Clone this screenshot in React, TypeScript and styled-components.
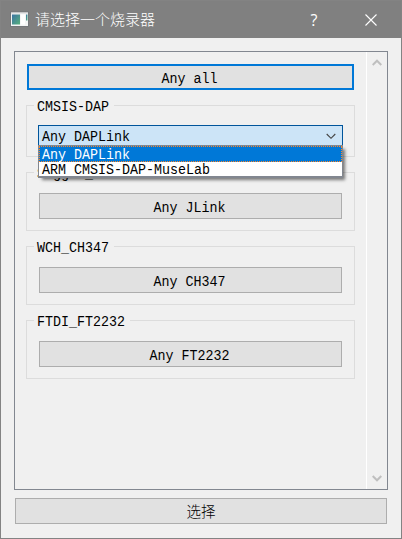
import React from "react";
import styled, { createGlobalStyle } from "styled-components";

const GlobalStyle = createGlobalStyle`
  * { box-sizing: border-box; }
  body { margin: 0; background: #f0f0f0; }
`;

const Dialog = styled.div`
  width: 402px;
  height: 539px;
  display: flex;
  flex-direction: column;
  border: 1px solid #838383;
  background: #f0f0f0;
  color: #000;
  font: 13.33px/16px "Liberation Mono", "Noto Sans CJK SC", monospace;
`;

const TitleBar = styled.header`
  height: 37px;
  flex: none;
  display: flex;
  align-items: center;
  padding-left: 9px;
  background: #808080;
  color: #fff;
`;

const Title = styled.h1`
  flex: 1;
  margin: 0 0 2px 5px;
  font: 300 15px/20px "Noto Sans CJK SC", sans-serif;
`;

const TitleButton = styled.button<{ $width: number }>`
  width: ${(p) => p.$width}px;
  height: 36px;
  display: flex;
  align-items: center;
  justify-content: center;
  padding: 0;
  border: 0;
  background: none;
  color: #fff;
  font: 400 16px/20px "Open Sans", sans-serif;
`;

const Body = styled.main`
  flex: 1;
  display: flex;
  flex-direction: column;
  gap: 8px;
  padding: 13px 13px 14px;
`;

const ScrollFrame = styled.section`
  height: 439px;
  width: 374px;
  display: flex;
  border: 1px solid #828790;
`;

const Content = styled.div`
  flex: 1;
  display: flex;
  flex-direction: column;
  gap: 15px;
  padding: 12px 11px 0;
`;

const ScrollBar = styled.div`
  width: 21px;
  display: flex;
  flex-direction: column;
  align-items: center;
  justify-content: space-between;
  padding: 6px 0 6px;
  border-left: 1px solid #fff;
`;

const PushButton = styled.button<{ $primary?: boolean; $margin?: string }>`
  height: 26px;
  flex: none;
  display: flex;
  align-items: center;
  justify-content: center;
  margin: ${(p) => p.$margin ?? "0"};
  padding: 2px 2px 0 0;
  border: ${(p) => (p.$primary ? "2px solid #0078d7" : "1px solid #adadad")};
  background: #e1e1e1;
  color: #000;
  font: inherit;
`;

const Group = styled.fieldset<{ $height: number }>`
  height: ${(p) => p.$height}px;
  flex: none;
  display: flex;
  flex-direction: column;
  margin: 0;
  padding: 0;
  border: 1px solid #dcdcdc;
  min-width: 0;
`;

const GroupLabel = styled.div`
  height: 16px;
  align-self: flex-start;
  margin: -8px 0 0 7px;
  padding: 0 5px 0 3px;
  background: #f0f0f0;
`;

/* Glyphs are stretched vertically to the tall, narrow shape of a bitmap serif. */
const Tall = styled.span`
  display: block;
  white-space: pre;
  transform: translateY(1.5px) scaleY(1.14);
`;

const Combo = styled.div`
  position: relative;
  height: 22px;
  margin: 11px 11px 0;
  display: flex;
  align-items: center;
  justify-content: space-between;
  padding: 0 6px 0 3px;
  border: 1px solid #00559b;
  background: #cce4f7;
`;

const Popup = styled.ul`
  position: absolute;
  z-index: 2;
  top: 19px;
  left: -1px;
  width: 305px;
  height: 33px;
  margin: 0;
  padding: 0;
  list-style: none;
  border: 1px solid #828790;
  border-bottom-width: 2px;
  background: #fff;
  box-shadow: 3px 3px 3px -1px rgba(0, 0, 0, 0.5);
`;

const Option = styled.li<{ $selected?: boolean }>`
  height: ${(p) => (p.$selected ? 16 : 14)}px;
  padding-left: ${(p) => (p.$selected ? 2 : 3)}px;
  line-height: 14px;
  border: ${(p) => (p.$selected ? "1px dotted #ff8728" : "0")};
  background: ${(p) => (p.$selected ? "#0078d7" : "#fff")};
  color: ${(p) => (p.$selected ? "#fff" : "#000")};
`;

const AcceptText = styled.span`
  margin: 0 0 2px 2px;
  font: 300 14.5px/18px "Noto Sans CJK SC", sans-serif;
`;

const AppIcon = () => (
  <svg width="20" height="18" viewBox="0 0 20 18">
    <defs>
      <linearGradient id="screen" x1="0" y1="0" x2="1" y2="1">
        <stop offset="0" stopColor="#3c74a4" />
        <stop offset="1" stopColor="#56b07c" />
      </linearGradient>
    </defs>
    <rect x="0.5" y="1" width="18" height="14.5" fill="#f4f5f5" stroke="#74777a" />
    <rect x="1" y="1.5" width="17" height="1" fill="#d5d8da" />
    <rect x="2" y="3.5" width="8" height="10" fill="url(#screen)" />
    <rect x="11" y="3.5" width="4" height="10" fill="#fff" />
    <rect x="16" y="3.5" width="1.5" height="6" fill="url(#screen)" />
  </svg>
);

const CloseIcon = () => (
  <svg width="12" height="12" viewBox="0 0 12 12">
    <path d="M0.5 0.5 11.5 11.5M11.5 0.5 0.5 11.5" stroke="#fff" strokeWidth="1.1" />
  </svg>
);

const ScrollArrow = ({ down }: { down?: boolean }) => (
  <svg width="10" height="9" viewBox="0 0 10 9">
    <path
      d={down ? "M0.7 2 5 6.3 9.3 2" : "M0.7 7 5 2.7 9.3 7"}
      fill="none"
      stroke="#bfbfbf"
      strokeWidth="2"
    />
  </svg>
);

const ComboArrow = () => (
  <svg width="10" height="7" viewBox="0 0 10 7">
    <path d="M0.7 1 5 5.3 9.3 1" fill="none" stroke="#444" strokeWidth="1.1" />
  </svg>
);

const probes = [
  { name: "Segger_JLink", action: "Any JLink" },
  { name: "WCH_CH347", action: "Any CH347" },
  { name: "FTDI_FT2232", action: "Any FT2232" },
];

export default function App() {
  return (
    <>
      <GlobalStyle />
      <Dialog>
        <TitleBar>
          <AppIcon />
          <Title>请选择一个烧录器</Title>
          <TitleButton $width={54}>?</TitleButton>
          <TitleButton $width={60}>
            <CloseIcon />
          </TitleButton>
        </TitleBar>
        <Body>
          <ScrollFrame>
            <Content>
              <PushButton $primary $margin="0 1px 0 1px">
                <Tall>Any all</Tall>
              </PushButton>
              <Group $height={52}>
                <GroupLabel>
                  <Tall>CMSIS-DAP</Tall>
                </GroupLabel>
                <Combo>
                  <Tall>Any DAPLink</Tall>
                  <ComboArrow />
                  <Popup>
                    <Option $selected>
                      <Tall>Any DAPLink</Tall>
                    </Option>
                    <Option>
                      <Tall>ARM CMSIS-DAP-MuseLab</Tall>
                    </Option>
                  </Popup>
                </Combo>
              </Group>
              {probes.map((probe) => (
                <Group key={probe.name} $height={59}>
                  <GroupLabel>
                    <Tall>{probe.name}</Tall>
                  </GroupLabel>
                  <PushButton $margin="12px 12px 0">
                    <Tall>{probe.action}</Tall>
                  </PushButton>
                </Group>
              ))}
            </Content>
            <ScrollBar>
              <ScrollArrow />
              <ScrollArrow down />
            </ScrollBar>
          </ScrollFrame>
          <PushButton $margin="0 1px">
            <AcceptText>选择</AcceptText>
          </PushButton>
        </Body>
      </Dialog>
    </>
  );
}
